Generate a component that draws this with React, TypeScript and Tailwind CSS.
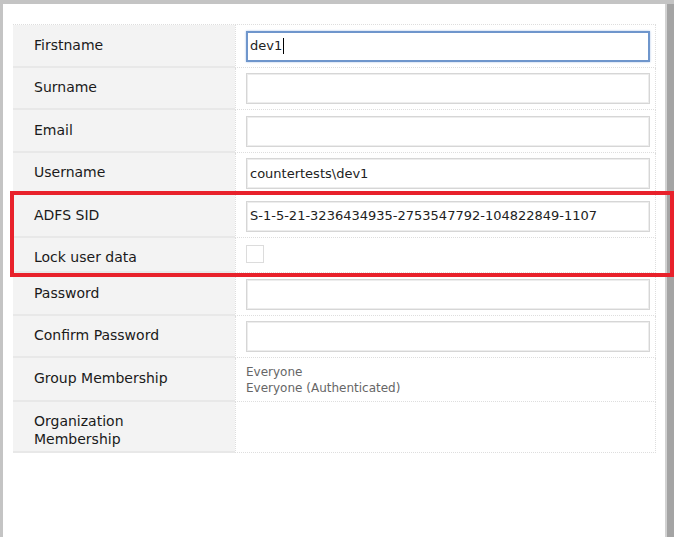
import React from "react";

type Row = {
  label: React.ReactNode;
  h: string;
  value?: string;
  kind: "input" | "focus" | "check" | "list" | "empty";
  items?: string[];
  labelPad?: string;
};

const rows: Row[] = [
  { label: "Firstname", h: "h-[43px]", value: "dev1", kind: "focus", labelPad: "pb-[2px]" },
  { label: "Surname", h: "h-[42px]", kind: "input", labelPad: "pb-[2px]" },
  { label: "Email", h: "h-[43px]", kind: "input", labelPad: "pb-[2px]" },
  { label: "Username", h: "h-[42px]", value: "countertests\\dev1", kind: "input", labelPad: "pb-[2px]" },
  { label: "ADFS SID", h: "h-[43px]", value: "S-1-5-21-3236434935-2753547792-104822849-1107", kind: "input", labelPad: "pb-[2px]" },
  { label: "Lock user data", h: "h-[35px]", kind: "check", labelPad: "pt-[4px]" },
  { label: "Password", h: "h-[43px]", kind: "input", labelPad: "pb-[2px]" },
  { label: "Confirm Password", h: "h-[42px]", kind: "input", labelPad: "pb-[2px]" },
  { label: "Group Membership", h: "h-[44px]", kind: "list", items: ["Everyone", "Everyone (Authenticated)"], labelPad: "pb-[2px]" },
  { label: <>Organization<br />Membership</>, h: "h-[51px]", kind: "empty", labelPad: "pt-[6px]" },
];

function Value({ row }: { row: Row }) {
  if (row.kind === "focus") {
    return (
      <div className="flex h-[31px] w-[404px] items-center border-2 border-[#6f96cc] bg-white pl-[2px] text-[13px] text-[#222] shadow-[0_0_2px_#a9c2e6]">
        {row.value}
        <span className="ml-[1px] h-[16px] w-[1px] bg-black" />
      </div>
    );
  }
  if (row.kind === "input") {
    return (
      <div className="flex h-[31px] w-[404px] items-center border border-[#d6d6d6] bg-white pl-[3px] text-[13px] text-[#222] shadow-[inset_0_0_0_1px_#ededed]">
        {row.value}
      </div>
    );
  }
  if (row.kind === "check") {
    return <div className="mb-[2px] h-[18px] w-[18px] border border-[#dcdcdc] bg-white" />;
  }
  if (row.kind === "list") {
    return (
      <div className="text-[12px] leading-[16px] text-[#666]">
        {row.items?.map((it) => (
          <div key={it}>{it}</div>
        ))}
      </div>
    );
  }
  return null;
}

export default function App() {
  return (
    <div className="flex h-[537px] w-[674px] bg-[#c4c4c4] pt-[4px] pl-[3px] font-['DejaVu_Sans',sans-serif]">
      <div className="relative flex-1 bg-white pt-[20px] pl-[10px]">
        <div className="w-[643px] border-t border-dotted border-[#dedede]">
          {rows.map((row, i) => (
            <div key={i} className={`flex ${row.h}`}>
              <div
                className={`flex w-[222px] items-center border-b-2 border-[#e8e8e8] bg-[#f3f3f3] pl-[21px] text-[14px] leading-[18px] text-[#1a1a1a] ${row.labelPad ?? ""}`}
              >
                <div>{row.label}</div>
              </div>
              <div className="flex flex-1 items-center border-r border-b border-l border-dotted border-[#dedede] pl-[10px]">
                <Value row={row} />
              </div>
            </div>
          ))}
        </div>
        <div className="absolute top-[187px] left-[7px] h-[86px] w-[664px] border-4 border-[#e8212b]" />
      </div>
      <div className="w-[9px] border-l-2 border-[#d2d2d2] bg-[#a4a4a4]" />
    </div>
  );
}
